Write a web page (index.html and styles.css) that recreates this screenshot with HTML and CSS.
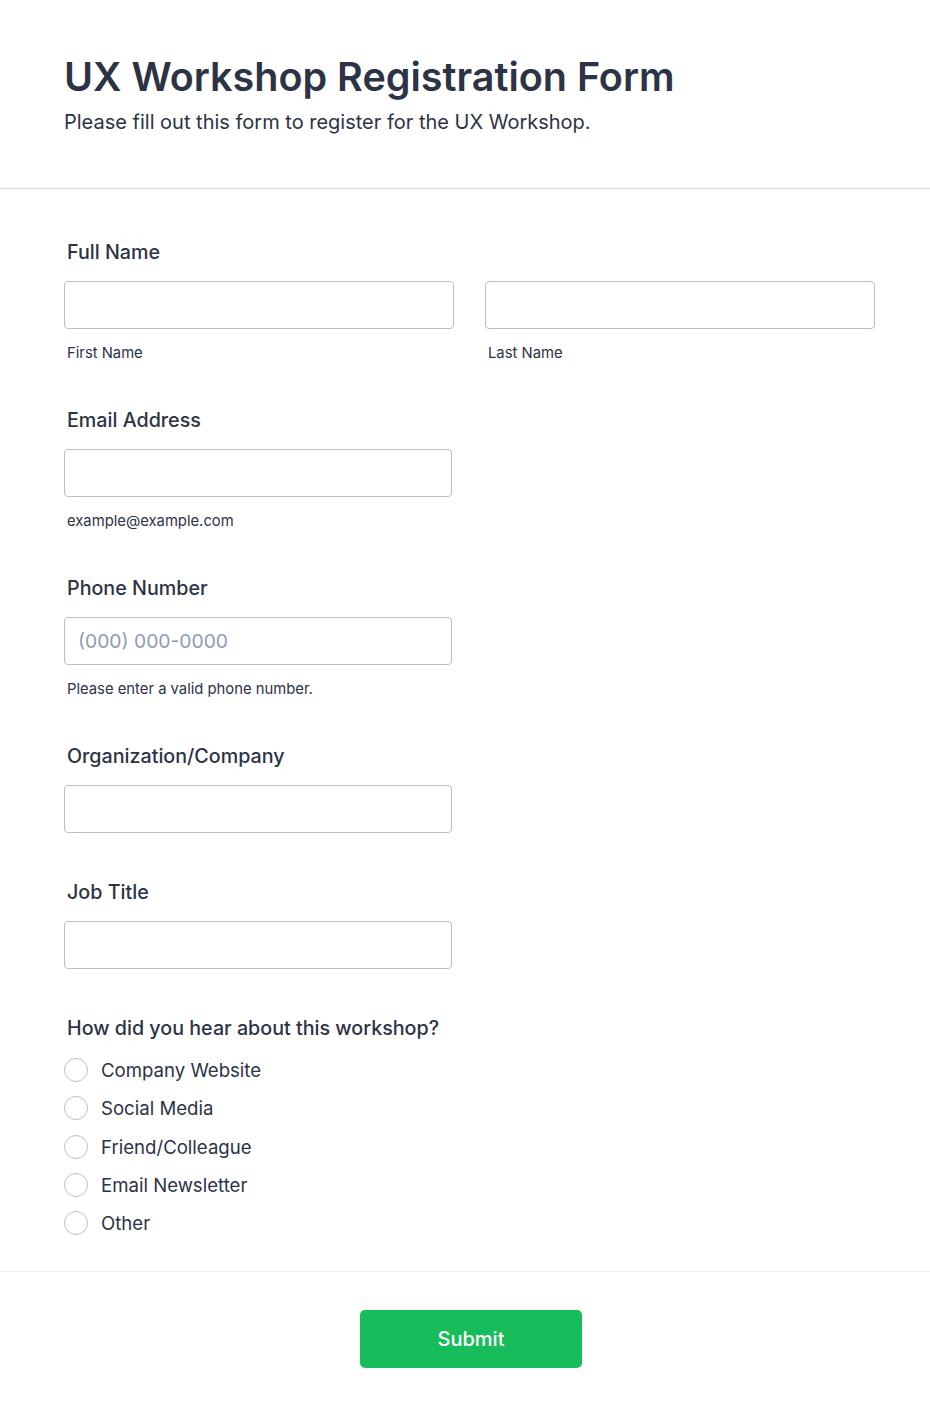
FILE: index.html
```html
<!DOCTYPE html>
<html lang="en">
<head>
<meta charset="utf-8">
<title>UX Workshop Registration Form</title>
<link rel="stylesheet" href="styles.css">
</head>
<body>
<div class="page">
  <header class="header">
    <h1 class="title">UX Workshop Registration Form</h1>
    <p class="subtitle">Please fill out this form to register for the UX Workshop.</p>
  </header>
  <form class="form">
    <div class="field">
      <label class="label">Full Name</label>
      <div class="name-row">
        <div class="sub">
          <input class="input" type="text">
          <span class="sublabel">First Name</span>
        </div>
        <div class="sub">
          <input class="input" type="text">
          <span class="sublabel">Last Name</span>
        </div>
      </div>
    </div>
    <div class="field">
      <label class="label">Email Address</label>
      <div class="sub half">
        <input class="input" type="email">
        <span class="sublabel">example@example.com</span>
      </div>
    </div>
    <div class="field">
      <label class="label">Phone Number</label>
      <div class="sub half">
        <input class="input" type="tel" placeholder="(000) 000-0000">
        <span class="sublabel">Please enter a valid phone number.</span>
      </div>
    </div>
    <div class="field plain">
      <label class="label">Organization/Company</label>
      <div class="sub half">
        <input class="input" type="text">
      </div>
    </div>
    <div class="field plain">
      <label class="label">Job Title</label>
      <div class="sub half">
        <input class="input" type="text">
      </div>
    </div>
    <div class="field">
      <label class="label">How did you hear about this workshop?</label>
      <div class="radios">
        <label class="radio"><span class="circle"></span><span>Company Website</span></label>
        <label class="radio"><span class="circle"></span><span>Social Media</span></label>
        <label class="radio"><span class="circle"></span><span>Friend/Colleague</span></label>
        <label class="radio"><span class="circle"></span><span>Email Newsletter</span></label>
        <label class="radio"><span class="circle"></span><span>Other</span></label>
      </div>
    </div>
  </form>
  <div class="footer">
    <button class="submit" type="button">Submit</button>
  </div>
</div>
</body>
</html>
```

FILE: styles.css
```css
* { box-sizing: border-box; }
html, body { margin: 0; padding: 0; background: #fff; }
body {
  font-family: Inter, "Noto Sans", "Liberation Sans", sans-serif;
  color: #2c3345;
}
.page { width: 930px; }
.header {
  padding: 53px 64px 54px;
  border-bottom: 1px solid #d8d8e8;
}
.title {
  margin: 0;
  font-size: 39.5px;
  line-height: 48px;
  font-weight: 600;
  color: #2c3345;
}
.subtitle {
  margin: 9px 0 0;
  font-size: 20px;
  line-height: 24px;
  font-weight: 400;
  color: #2c3345;
}
.form {
  display: flex;
  flex-direction: column;
  gap: 46px;
  padding: 51px 55px 29px 64px;
  border-bottom: 1px solid #eaeef4;
}
.field { display: flex; flex-direction: column; }
.field.plain { padding-bottom: 1px; }
.label {
  display: block;
  padding-left: 3px;
  font-size: 19.7px;
  line-height: 24px;
  font-weight: 500;
  margin-bottom: 17px;
  color: #2c3345;
}
.name-row {
  display: grid;
  grid-template-columns: 390px 390px;
  column-gap: 31px;
}
.sub { display: flex; flex-direction: column; }
.half { width: 388px; }
.input {
  display: block;
  width: 100%;
  height: 48px;
  border: 1px solid #b8bdc9;
  border-radius: 4px;
  padding: 0 13px;
  font-family: inherit;
  font-size: 19.3px;
  color: #2c3345;
  background: #fff;
  outline: none;
}
.input::placeholder { color: #8f9bb3; }
.sublabel {
  display: block;
  margin-top: 16px;
  padding-left: 3px;
  font-size: 14.8px;
  line-height: 17px;
  color: #2c3345;
}
.radios {
  display: flex;
  flex-direction: column;
  margin-top: -6px;
}
.radio {
  display: flex;
  align-items: center;
  gap: 13px;
  height: 38.3px;
  font-size: 18.6px;
  color: #2c3345;
}
.circle {
  width: 24px;
  height: 24px;
  border: 1px solid #b8bdc9;
  border-radius: 50%;
  flex: none;
}
.footer {
  display: flex;
  justify-content: center;
  padding: 38px 0 49px 12px;
}
.submit {
  width: 222px;
  height: 58px;
  border: none;
  border-radius: 5px;
  background: #18bd5b;
  color: #fff;
  font-family: inherit;
  font-size: 20px;
  font-weight: 500;
}
```
